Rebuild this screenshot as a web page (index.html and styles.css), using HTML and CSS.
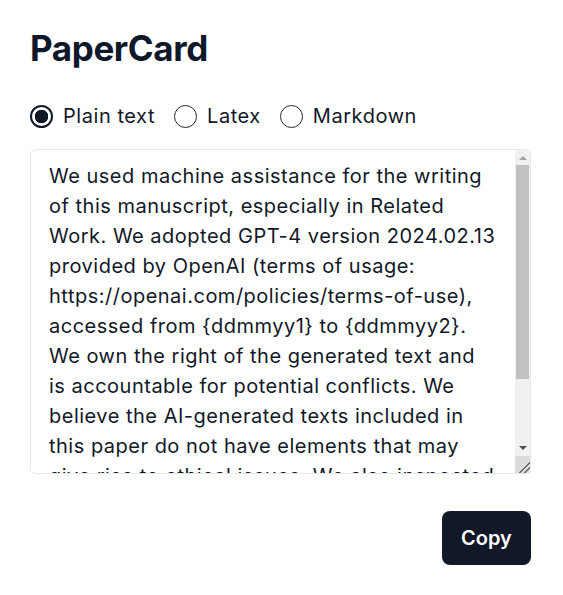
FILE: index.html
```html
<!DOCTYPE html>
<html>
<head>
<meta charset="utf-8">
<link rel="stylesheet" href="styles.css">
</head>
<body>
<main class="card">
  <h1 class="title">PaperCard</h1>
  <div class="options">
    <label class="opt"><input type="radio" name="fmt" checked><span>Plain text</span></label>
    <label class="opt"><input type="radio" name="fmt"><span>Latex</span></label>
    <label class="opt"><input type="radio" name="fmt"><span>Markdown</span></label>
  </div>
  <div class="field">
    <textarea class="output">We used machine assistance for the writing of this manuscript, especially in Related Work. We adopted GPT-4 version 2024.02.13 provided by OpenAI (terms of usage: https://openai.com/policies/terms-of-use), accessed from {ddmmyy1} to {ddmmyy2}. We own the right of the generated text and is accountable for potential conflicts. We believe the AI-generated texts included in this paper do not have elements that may give rise to ethical issues. We also inspected the generated texts carefully to ensure their accuracy and correctness.</textarea>
    <div class="scrollbar" aria-hidden="true">
      <div class="sb-btn sb-up"></div>
      <div class="sb-track"><div class="sb-thumb"></div></div>
      <div class="sb-btn sb-down"></div>
      <div class="sb-corner"></div>
    </div>
  </div>
  <div class="actions">
    <button class="copy">Copy</button>
  </div>
</main>
</body>
</html>
```
FILE: styles.css
```css
html, body {
  margin: 0;
  padding: 0;
  background: #ffffff;
}
body {
  font-family: Inter, "Noto Sans", sans-serif;
  color: #111827;
}
.card {
  width: 501px;
  padding: 26px 30px 0 30px;
  display: flex;
  flex-direction: column;
}
.title {
  margin: 0;
  font-size: 35px;
  line-height: 44px;
  font-weight: 700;
  color: #0f172a;
  letter-spacing: -0.4px;
}
.options {
  display: flex;
  gap: 19px;
  margin-top: 32px;
  align-items: center;
}
.opt {
  display: flex;
  align-items: center;
  gap: 10px;
  font-size: 20px;
  line-height: 28px;
  letter-spacing: 0.55px;
  color: #111827;
}
.opt input {
  appearance: none;
  -webkit-appearance: none;
  margin: 0;
  width: 23px;
  height: 23px;
  border-radius: 50%;
  border: 1.5px solid #1f2937;
  background: #fff;
  box-sizing: border-box;
}
.opt input:checked {
  border-color: #111827;
  background: radial-gradient(circle, #111827 0 6.5px, #fff 7px);
  border-width: 2px;
}
.field {
  position: relative;
  margin-top: 19px;
  width: 501px;
  height: 325px;
}
.output {
  display: block;
  box-sizing: border-box;
  width: 501px;
  height: 325px;
  border: 1px solid #e5e7eb;
  border-radius: 6px;
  padding: 11px 34px 12px 18px;
  font-family: Inter, "Noto Sans", sans-serif;
  font-size: 20px;
  line-height: 30px;
  letter-spacing: 0.5px;
  color: #111827;
  resize: none;
  outline: none;
  overflow: hidden;
  margin: 0;
}
.scrollbar {
  position: absolute;
  top: 1px;
  right: 1px;
  bottom: 1px;
  width: 15px;
  background: #f1f1f1;
  display: flex;
  flex-direction: column;
  border-top-right-radius: 5px;
  overflow: hidden;
}
.sb-btn {
  height: 15px;
  flex: none;
  position: relative;
}
.sb-up::after,
.sb-down::after {
  content: "";
  position: absolute;
  left: 3.5px;
  width: 0;
  height: 0;
  border-left: 4px solid transparent;
  border-right: 4px solid transparent;
}
.sb-up::after {
  top: 6px;
  border-bottom: 4px solid #a3a3a3;
}
.sb-down::after {
  top: 5px;
  border-top: 4px solid #505050;
}
.sb-track {
  flex: 1;
  padding: 0 1px;
}
.sb-thumb {
  height: 214px;
  background: #c1c1c1;
}
.sb-corner {
  height: 17px;
  flex: none;
  background: #dcdcdc;
  background-image: linear-gradient(135deg, transparent 0 64%, #6b6b6b 64% 69%, transparent 69% 80%, #6b6b6b 80% 85%, transparent 85%);
}
.actions {
  display: flex;
  justify-content: flex-end;
  margin-top: 37px;
}
.copy {
  background: #111827;
  color: #fff;
  border: none;
  border-radius: 8px;
  font-family: Inter, "Noto Sans", sans-serif;
  font-size: 20px;
  font-weight: 600;
  height: 54px;
  width: 89px;
  padding: 0;
}
```
